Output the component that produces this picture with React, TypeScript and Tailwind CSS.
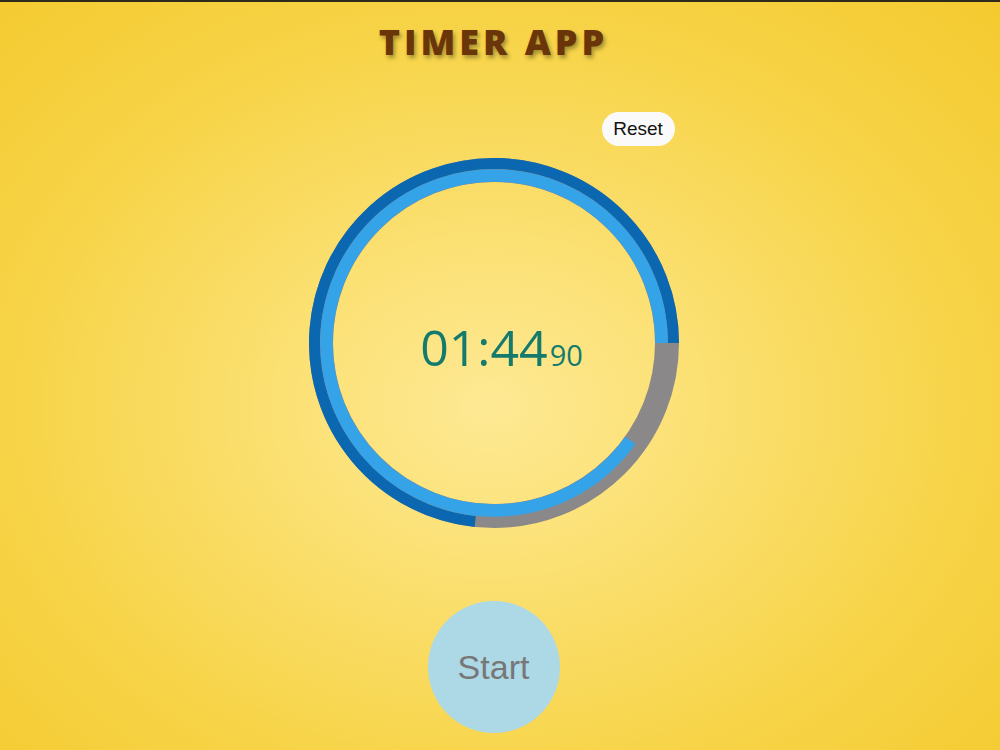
import React from 'react';

const SIZE = 370;
const C = SIZE / 2;

// arc path clockwise from angle a to b (degrees, 0 = 3 o'clock)
function arc(r: number, a: number, b: number) {
  const rad = (d: number) => (d * Math.PI) / 180;
  const x1 = C + r * Math.cos(rad(a));
  const y1 = C + r * Math.sin(rad(a));
  const x2 = C + r * Math.cos(rad(b));
  const y2 = C + r * Math.sin(rad(b));
  const large = b - a > 180 ? 1 : 0;
  return `M ${x1} ${y1} A ${r} ${r} 0 ${large} 1 ${x2} ${y2}`;
}

function Ring() {
  return (
    <svg width={SIZE} height={SIZE} viewBox={`0 0 ${SIZE} ${SIZE}`} className="[grid-area:1/1]">
      <circle cx={C} cy={C} r={173} fill="none" stroke="#8b8889" strokeWidth={24} />
      <path d={arc(179.5, 96, 360)} fill="none" stroke="#0b68b0" strokeWidth={11} />
      <path d={arc(167.5, 35.5, 360)} fill="none" stroke="#35a3e8" strokeWidth={12.5} />
    </svg>
  );
}

export default function App() {
  return (
    <div className="min-h-screen w-full border-t-2 border-[#2e2a1c] bg-[radial-gradient(ellipse_at_49%_54%,#fee994_0%,#fbe072_30%,#f7d448_65%,#f4ca2f_100%)] flex flex-col items-center pr-[13px]">
      <h1 className="mt-[22px] text-[36px] leading-none font-extrabold tracking-[4px] text-[#6a3508] [text-shadow:2px_3px_4px_rgba(0,0,0,0.35)] font-['Open_Sans',sans-serif]">
        TIMER APP
      </h1>

      <div className="w-[370px] flex justify-end mt-[52px] pr-[4px]">
        <button className="w-[73px] h-[34px] rounded-full bg-[#fafafa] text-[19px] text-[#111] font-['Liberation_Sans',Arial,sans-serif]">
          Reset
        </button>
      </div>

      <div className="mt-[12px] grid w-[370px] h-[370px] place-items-center">
        <Ring />
        <div className="[grid-area:1/1] pt-[8px] pl-[16px] flex items-baseline text-[#137a6c] font-['Open_Sans',sans-serif]">
          <span className="text-[50px] leading-none">01:44</span>
          <span className="text-[29px] leading-none ml-[2px]">90</span>
        </div>
      </div>

      <button className="mt-[73px] w-[132px] h-[132px] rounded-full bg-[#add8e6] text-[34px] text-[#777777] font-['Liberation_Sans',Arial,sans-serif]">
        Start
      </button>
    </div>
  );
}
